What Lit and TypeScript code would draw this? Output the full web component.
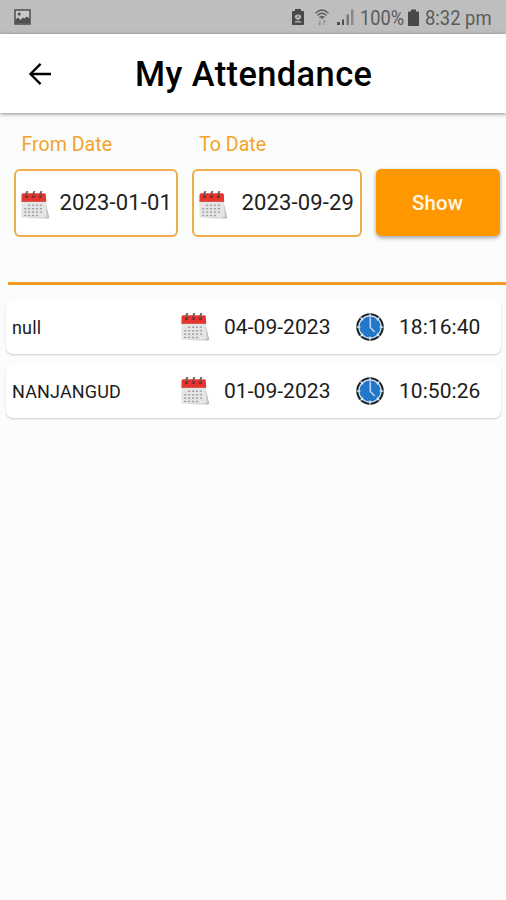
import { LitElement, html, css, svg } from "lit";
import { customElement, property } from "lit/decorators.js";

const dots: Array<[number, number]> = [];
for (let r = 0; r < 4; r++) {
  for (let c = 0; c < 5; c++) {
    if (r === 0 && c < 1) continue;
    if (r === 3 && c > 3) continue;
    dots.push([4.2 + c * 3.9, 14.6 + r * 3.4]);
  }
}

@customElement("calendar-icon")
export class CalendarIcon extends LitElement {
  static styles = css`
    :host { display: block; width: 30px; height: 30px; flex: none; }
    svg { display: block; }
  `;
  render() {
    return html`<svg width="30" height="30" viewBox="0 0 30 30">
      <path d="M24.5 8 L29.2 27.2 Q29.3 28.6 27.6 28.5 L8 28 Z" fill="#b9b9b9" />
      <path d="M25.6 12 L27.8 27 L23 27.8 Z" fill="#d4d4d4" />
      <path d="M1.5 10 H25.6 L26.2 25.5 Q25 27.8 22.5 27.8 H1.5 Z" fill="#e6e5e5" />
      <path d="M1.5 4.8 Q1.5 3.2 3 3.2 H24.4 Q25.9 3.2 25.9 4.8 L26.2 11.6 H1.5 Z" fill="#e8352e" />
      <path d="M1.5 10.8 H26 V11.8 H1.5 Z" fill="#cf4a43" />
      ${dots.map(([x, y]) => svg`<rect x=${x} y=${y} width="2.1" height="1.4" fill="#a0a0a0" />`)}
      ${[6.5, 13.5, 20.5].map(
        (x) => svg`<circle cx=${x} cy="6.6" r="1.7" fill="#8d2420" />
          <path d=${`M${x} 6.8 V2.6 Q${x + 0.4} 1 ${x + 1.5} 2.2`} fill="none" stroke="#5c5558" stroke-width="1.5" />`
      )}
    </svg>`;
  }
}

@customElement("clock-icon")
export class ClockIcon extends LitElement {
  static styles = css`
    :host { display: block; width: 28px; height: 28px; flex: none; }
    svg { display: block; }
  `;
  render() {
    return html`<svg width="28" height="28" viewBox="0 0 28 28">
      <circle cx="14" cy="14" r="13.8" fill="#1f262e" />
      <circle cx="14" cy="14" r="11.7" fill="#d3e6f4" />
      <circle cx="14" cy="14" r="10.5" fill="#2377c8" />
      ${[0, 45, 90, 135, 180, 225, 270, 315].map(
        (a) => svg`<path d="M14 0.6 V4.4" stroke="#e4f0f8" stroke-width="1.3" transform=${`rotate(${a} 14 14)`} />`
      )}
      <path d="M14.3 5 V14.5 L18.8 19" fill="none" stroke="#b9d9f2" stroke-width="1.5" />
    </svg>`;
  }
}

@customElement("date-field")
export class DateField extends LitElement {
  @property() label = "";
  @property() value = "";
  static styles = css`
    :host { display: block; }
    .label { height: 20px; margin: 0 0 14px 7.5px; font-size: 19.6px; line-height: 20px; color: #f3a32b; white-space: nowrap; }
    .box { box-sizing: border-box; height: 68px; border: 2px solid #f1ad4b; border-radius: 6px; background: #fff;
      display: flex; align-items: center; justify-content: space-between; padding: 0 var(--field-end, 4px) 0 4px; }
    .value { font-size: 22px; line-height: 26px; letter-spacing: 0.15px; color: #222; white-space: nowrap; }
    calendar-icon { margin-top: 3px; }
  `;
  render() {
    return html`<div class="label">${this.label}</div>
      <div class="box"><calendar-icon></calendar-icon><span class="value">${this.value}</span></div>`;
  }
}

@customElement("attendance-row")
export class AttendanceRow extends LitElement {
  @property() place = "";
  @property() date = "";
  @property() time = "";
  static styles = css`
    :host { display: grid; grid-template-columns: 168px 44px 132px 43px 1fr; align-items: center; box-sizing: border-box;
      height: 54px; padding-left: 6px; background: #fff; border-radius: 7px;
      box-shadow: 0 1px 2px rgba(0, 0, 0, 0.2); color: #1c1c1c; white-space: nowrap; }
    .place { font-size: 18px; letter-spacing: 0.15px; }
    .num { font-size: 21px; letter-spacing: 0.05px; }
  `;
  render() {
    return html`<span class="place">${this.place}</span>
      <calendar-icon></calendar-icon><span class="num">${this.date}</span>
      <clock-icon></clock-icon><span class="num">${this.time}</span>`;
  }
}

@customElement("app-root")
export class AppRoot extends LitElement {
  private records = [
    { place: "null", date: "04-09-2023", time: "18:16:40" },
    { place: "NANJANGUD", date: "01-09-2023", time: "10:50:26" },
  ];
  static styles = css`
    :host { display: flex; flex-direction: column; width: 506px; height: 900px; overflow: hidden;
      background: #fbfdfc; font-family: Roboto, sans-serif; }
    .status { height: 34px; flex: none; display: flex; align-items: center; background: #bebebe; color: #5b5b5b;
      box-sizing: border-box; padding: 0 14px; }
    .status svg { display: block; flex: none; }
    .spacer { flex: 1; }
    .lock { margin-right: 11px; }
    .wifi { margin-right: 8px; }
    .signal { margin-right: 6px; }
    .status-text { font-size: 20px; line-height: 24px; padding-top: 2px; white-space: nowrap; transform: scaleX(0.91); transform-origin: left; }
    .pct { width: 48px; }
    .clock { width: 67px; margin-left: 6px; transform: scaleX(0.92); }
    .bar { height: 79px; flex: none; display: flex; align-items: center; background: #fff; z-index: 1;
      box-shadow: 0 1px 4px rgba(0, 0, 0, 0.45); }
    .back { display: block; margin-left: 28px; width: 24px; height: 24px; }
    h1 { margin: 0 0 0 83px; font-size: 34.4px; line-height: 40px; letter-spacing: 0.42px; font-weight: 500; color: #000; white-space: nowrap; }
    .filters { display: flex; align-items: flex-end; padding: 22px 6px 0 14px; }
    .from { width: 164px; }
    .to { width: 170px; margin-left: 13.5px; --field-end: 5.5px; }
    .show { margin: 0 0 1px 14px; width: 124px; height: 67px; border: 0; padding: 0; border-radius: 5px; background: #ff9800;
      color: #fff6e6; font: 500 20.4px/24px Roboto, sans-serif; letter-spacing: 0.2px; box-shadow: 0 2px 4px rgba(0, 0, 0, 0.35); }
    .rule { height: 3px; flex: none; margin: 45px 0 0 8px; background: #f59a23; }
    .list { display: flex; flex-direction: column; gap: 10px; padding: 15px 5px 0 6px; }
  `;
  render() {
    return html`
      <div class="status">
        <svg width="17" height="16" viewBox="0 0 17 16">
          <rect x="1" y="1" width="15" height="14" fill="#c9c9c9" stroke="#555" stroke-width="1.6" />
          <path d="M1 14.5 V11 L4 8.5 L6.5 11 L9 8.5 L10.5 9.5 L13 7.5 L16 10 V14.5 Z" fill="#505050" />
          <circle cx="5.2" cy="5" r="1.6" fill="#505050" />
        </svg>
        <div class="spacer"></div>
        <svg class="lock" width="12" height="16" viewBox="0 0 12 16">
          <path d="M3 0 H9 V2 H11 Q12 2 12 3 V15 Q12 16 11 16 H1 Q0 16 0 15 V3 Q0 2 1 2 H3 Z" fill="#484848" />
          <path d="M2.6 8.8 A3.4 3.4 0 0 1 9.4 8.8 Z" fill="#bebebe" />
          <path d="M6 7 V11.6 M3.6 9.6 H8.4 M2.8 12.8 H9.2" stroke="#bebebe" stroke-width="1.2" />
          <path d="M6 6.6 V8.6" stroke="#484848" stroke-width="1.2" />
        </svg>
        <svg class="wifi" width="14" height="17" viewBox="0 0 14 17" fill="none" stroke="#5c5c5c">
          <path d="M0.5 4.2 Q7 -2.2 13.5 4.2 M2.5 6.4 Q7 2.2 11.5 6.4 M4.4 8.4 Q7 6.4 9.6 8.4" stroke-width="1.3" />
          <path d="M5.8 9 H8.2" stroke-width="1.6" />
          <path d="M5 11.5 V16 M3.4 14.3 L5 16 M9 16 V11.5 M10.6 13.2 L9 11.5" stroke="#8c8c8c" stroke-width="1.1" />
        </svg>
        <svg class="signal" width="17" height="16" viewBox="0 0 17 16">
          <path d="M0 13 H3 V16 H0 Z M5 10.5 H7 V16 H5 Z" fill="#4f4f4f" />
          <path d="M9.5 5.5 H12 V16 H9.5 Z" fill="#777" />
          <path d="M14 0.5 H16.5 V16 H14 Z" fill="#8a8a8a" />
        </svg>
        <span class="status-text pct">100%</span>
        <svg width="11" height="17" viewBox="0 0 11 17">
          <path d="M3 0.5 H8 V2.5 H10 Q11 2.5 11 3.5 V16 Q11 17 10 17 H1 Q0 17 0 16 V3.5 Q0 2.5 1 2.5 H3 Z" fill="#484848" />
        </svg>
        <span class="status-text clock">8:32 pm</span>
      </div>
      <div class="bar">
        <svg class="back" viewBox="0 0 24 24" fill="none" stroke="#000" stroke-width="2.3">
          <path d="M23 12 H2.5 M12.6 1.9 L2.5 12 L12.6 22.1" />
        </svg>
        <h1>My Attendance</h1>
      </div>
      <div class="filters">
        <date-field class="from" label="From Date" value="2023-01-01"></date-field>
        <date-field class="to" label="To Date" value="2023-09-29"></date-field>
        <button class="show">Show</button>
      </div>
      <div class="rule"></div>
      <div class="list">
        ${this.records.map(
          (r) => html`<attendance-row .place=${r.place} .date=${r.date} .time=${r.time}></attendance-row>`
        )}
      </div>
    `;
  }
}
